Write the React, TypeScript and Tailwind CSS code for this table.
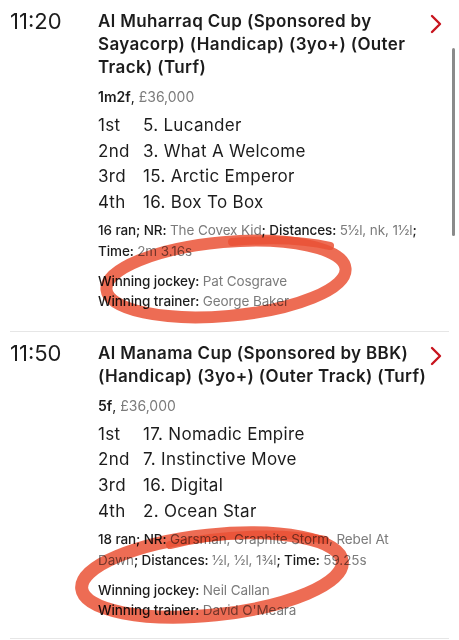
import React from "react";

type Race = {
  time: string;
  title: React.ReactNode;
  dist: string;
  prize: string;
  results: [string, string][];
  info: React.ReactNode;
  jockey: string;
  trainer: string;
};

const G = ({ children }: { children: React.ReactNode }) => (
  <span className="text-[#7b7b7b] font-normal">{children}</span>
);

const races: Race[] = [
  {
    time: "11:20",
    title: (
      <>
        Al Muharraq Cup (Sponsored by
        <br />
        Sayacorp) (Handicap) (3yo+) (Outer
        <br />
        Track) (Turf)
      </>
    ),
    dist: "1m2f",
    prize: "£36,000",
    results: [
      ["1st", "5. Lucander"],
      ["2nd", "3. What A Welcome"],
      ["3rd", "15. Arctic Emperor"],
      ["4th", "16. Box To Box"],
    ],
    info: (
      <>
        16 ran; NR: <G>The Covex Kid</G>; Distances: <G>5½l, nk, 1½l</G>;
        <br />
        Time: <G>2m 3.16s</G>
      </>
    ),
    jockey: "Pat Cosgrave",
    trainer: "George Baker",
  },
  {
    time: "11:50",
    title: (
      <>
        Al Manama Cup (Sponsored by BBK)
        <br />
        (Handicap) (3yo+) (Outer Track) (Turf)
      </>
    ),
    dist: "5f",
    prize: "£36,000",
    results: [
      ["1st", "17. Nomadic Empire"],
      ["2nd", "7. Instinctive Move"],
      ["3rd", "16. Digital"],
      ["4th", "2. Ocean Star"],
    ],
    info: (
      <>
        18 ran; NR: <G>Garsman, Graphite Storm, Rebel At</G>
        <br />
        <G>Dawn</G>; Distances: <G>½l, ½l, 1¾l</G>; Time: <G>59.25s</G>
      </>
    ),
    jockey: "Neil Callan",
    trainer: "David O'Meara",
  },
];

function Chevron() {
  return (
    <svg width="12" height="20" viewBox="0 0 12 20" className="block">
      <path d="M2 2 L10 10 L2 18" fill="none" stroke="#c8141e" strokeWidth="2.4" strokeLinecap="round" strokeLinejoin="round" />
    </svg>
  );
}

function RaceBlock({ r, pb }: { r: Race; pb: string }) {
  return (
    <div className={`flex border-b border-[#e6e6e6] mx-[10px] pt-[10px] ${pb}`}>
      <div className="w-[88px] shrink-0 text-[22px] leading-[23px] text-[#1c1c1c]">{r.time}</div>
      <div className="flex-1 text-[#1c1c1c]">
        <div className="text-[17px] leading-[23px] font-semibold whitespace-nowrap tracking-[0.35px]">{r.title}</div>
        <div className="mt-[8px] text-[14px] leading-[20px]">
          <span className="font-semibold">{r.dist}</span>, <G>{r.prize}</G>
        </div>
        <div className="mt-[6px]">
          {r.results.map(([p, h]) => (
            <div key={p} className="flex text-[17px] leading-[25.6px] tracking-[0.3px]">
              <div className="w-[45px] shrink-0">{p}</div>
              <div>{h}</div>
            </div>
          ))}
        </div>
        <div className="mt-[4.5px] text-[13.5px] leading-[21px] whitespace-nowrap font-medium tracking-[-0.1px]">{r.info}</div>
        <div className="mt-[9px] text-[13.5px] leading-[20px] font-medium tracking-[-0.1px]">
          <div>
            Winning jockey: <G>{r.jockey}</G>
          </div>
          <div>
            Winning trainer: <G>{r.trainer}</G>
          </div>
        </div>
      </div>
      <div className="w-[22px] shrink-0 pt-[4px] pl-[3px] flex justify-start">
        <Chevron />
      </div>
    </div>
  );
}

export default function App() {
  return (
    <div
      className="relative w-[459px] h-[640px] bg-white overflow-hidden"
      style={{ fontFamily: "Inter, 'Noto Sans', sans-serif" }}
    >
      <RaceBlock r={races[0]} pb="pb-[20px]" />
      <RaceBlock r={races[1]} pb="pb-[18px]" />
      {/* scrollbar */}
      <div className="absolute left-[452px] top-[48px] w-[3px] h-[188px] rounded-full bg-[#8a8a8a]" />
      {/* hand-drawn annotations */}
      <svg className="absolute inset-0 pointer-events-none mix-blend-multiply" width="459" height="640" viewBox="0 0 459 640">
        <g fill="none" stroke="#ea5236" strokeLinecap="round" strokeOpacity="0.85">
          <ellipse cx="226" cy="279" rx="120" ry="37" transform="rotate(-5 226 279)" strokeWidth="12" />
          <path d="M232 242 C 270 239, 305 240, 330 246" strokeWidth="8" />
          <ellipse cx="212" cy="575" rx="131" ry="40" transform="rotate(-6 212 575)" strokeWidth="13" />
          <path d="M170 545 C 220 533, 285 531, 325 540" strokeWidth="8" />
        </g>
      </svg>
    </div>
  );
}
